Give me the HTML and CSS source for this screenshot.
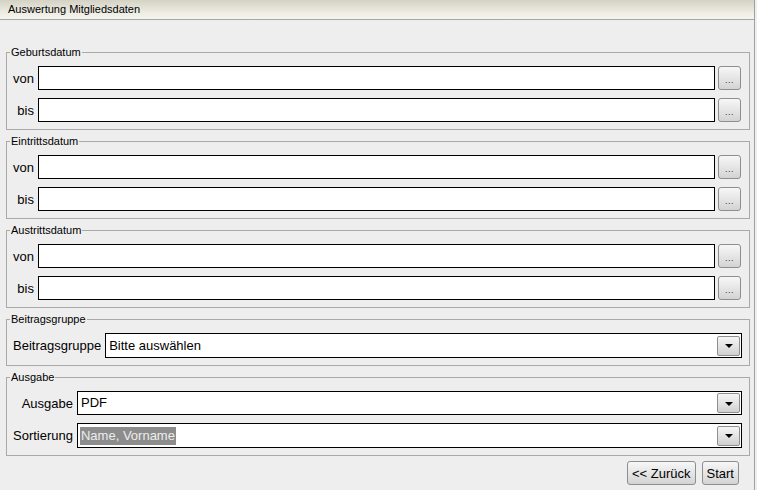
FILE: index.html
```html
<!DOCTYPE html>
<html lang="de">
<head>
<meta charset="utf-8">
<title>Auswertung Mitgliedsdaten</title>
<link rel="stylesheet" href="styles.css">
</head>
<body>
<div class="app">
  <div class="titlebar">Auswertung Mitgliedsdaten</div>
  <div class="content">
    <fieldset class="group">
      <legend>Geburtsdatum</legend>
      <div class="grid date">
        <label>von</label><input class="field" type="text"><button class="dots">...</button>
        <label>bis</label><input class="field" type="text"><button class="dots">...</button>
      </div>
    </fieldset>
    <fieldset class="group">
      <legend>Eintrittsdatum</legend>
      <div class="grid date">
        <label>von</label><input class="field" type="text"><button class="dots">...</button>
        <label>bis</label><input class="field" type="text"><button class="dots">...</button>
      </div>
    </fieldset>
    <fieldset class="group">
      <legend>Austrittsdatum</legend>
      <div class="grid date">
        <label>von</label><input class="field" type="text"><button class="dots">...</button>
        <label>bis</label><input class="field" type="text"><button class="dots">...</button>
      </div>
    </fieldset>
    <fieldset class="group">
      <legend>Beitragsgruppe</legend>
      <div class="grid combo">
        <label>Beitragsgruppe</label>
        <div class="select tall"><span class="value">Bitte auswählen</span><span class="drop"><span class="arrow"></span></span></div>
      </div>
    </fieldset>
    <fieldset class="group">
      <legend>Ausgabe</legend>
      <div class="grid combo">
        <label>Ausgabe</label>
        <div class="select"><span class="value">PDF</span><span class="drop"><span class="arrow"></span></span></div>
        <label>Sortierung</label>
        <div class="select tall"><span class="value selected">Name, Vorname</span><span class="drop"><span class="arrow"></span></span></div>
      </div>
    </fieldset>
    <div class="actions">
      <button class="btn">&lt;&lt; Zurück</button>
      <button class="btn">Start</button>
    </div>
  </div>
</div>
</body>
</html>
```

FILE: styles.css
```css
html, body {
  margin: 0;
  padding: 0;
  background: #eeeeee;
  font-family: "Liberation Sans", Arial, sans-serif;
}

.app {
  width: 755px;
  height: 490px;
  box-sizing: border-box;
  border-right: 1px solid #a0a0a0;
  background: #eeeeee;
}

.titlebar {
  height: 19px;
  line-height: 19px;
  padding-left: 8px;
  font-size: 11px;
  color: #000;
  background: linear-gradient(#d3d2c4, #efeee5 70%, #f5f4ee);
  border-bottom: 1px solid #a6a6a6;
}

.content {
  padding: 26px 0 0 6px;
}

.group {
  width: 744px;
  box-sizing: border-box;
  margin: 0 0 5px 0;
  padding: 7px 7px 7px 6px;
  border: 1px solid #a9a9a9;
  min-inline-size: 0;
}

.group legend {
  font-size: 11px;
  line-height: 13px;
  padding: 0 1px;
  margin-left: -3px;
  color: #000;
}

.grid {
  display: grid;
  row-gap: 8px;
  align-items: center;
}

.grid.date {
  grid-template-columns: auto 1fr 23px;
  column-gap: 4px;
}

.grid.date .dots {
  margin-left: -1px;
}

.grid.combo {
  grid-template-columns: auto 1fr;
  column-gap: 4px;
}

.grid label {
  font-size: 13px;
  text-align: right;
  color: #000;
}

.field {
  height: 24px;
  box-sizing: border-box;
  border: 1px solid #000;
  background: #fff;
  margin: 0;
  padding: 0 2px;
  font: 13px "Liberation Sans", Arial, sans-serif;
  outline: none;
  width: 100%;
}

.dots {
  width: 23px;
  height: 24px;
  box-sizing: border-box;
  margin: 0;
  padding: 4px 0 0 0;
  border: 1px solid #8e8e8e;
  border-radius: 3px;
  background: linear-gradient(#f7f7f7, #e2e2e2 60%, #d3d3d3);
  font: 9px "Liberation Sans", Arial, sans-serif;
  color: #333;
  letter-spacing: 0.5px;
}

.select {
  height: 24px;
  box-sizing: border-box;
  border: 1px solid #000;
  background: #fff;
  display: flex;
  align-items: center;
  justify-content: space-between;
  padding: 0 1px 0 2px;
}

.select.tall {
  height: 25px;
}

.value {
  font-size: 13px;
  line-height: 18px;
  padding: 0 1px;
  color: #000;
}

.value.selected {
  background: #8c8c8c;
  color: #ececec;
}

.drop {
  width: 23px;
  height: 20px;
  box-sizing: border-box;
  border: 1px solid #8e8e8e;
  border-radius: 2px;
  background: linear-gradient(#f5f5f5, #e0e0e0 60%, #d0d0d0);
  display: flex;
  align-items: center;
  justify-content: center;
}

.arrow {
  width: 0;
  height: 0;
  border-left: 4px solid transparent;
  border-right: 4px solid transparent;
  border-top: 4px solid #000;
  margin-top: 1px;
}

.actions {
  width: 733px;
  display: flex;
  justify-content: flex-end;
  gap: 6px;
}

.btn {
  height: 24px;
  box-sizing: border-box;
  margin: 0;
  padding: 0 4px;
  border: 1px solid #8e8e8e;
  border-radius: 3px;
  background: linear-gradient(#f7f7f7, #e2e2e2 60%, #d3d3d3);
  font: 13px "Liberation Sans", Arial, sans-serif;
  color: #000;
}
```
